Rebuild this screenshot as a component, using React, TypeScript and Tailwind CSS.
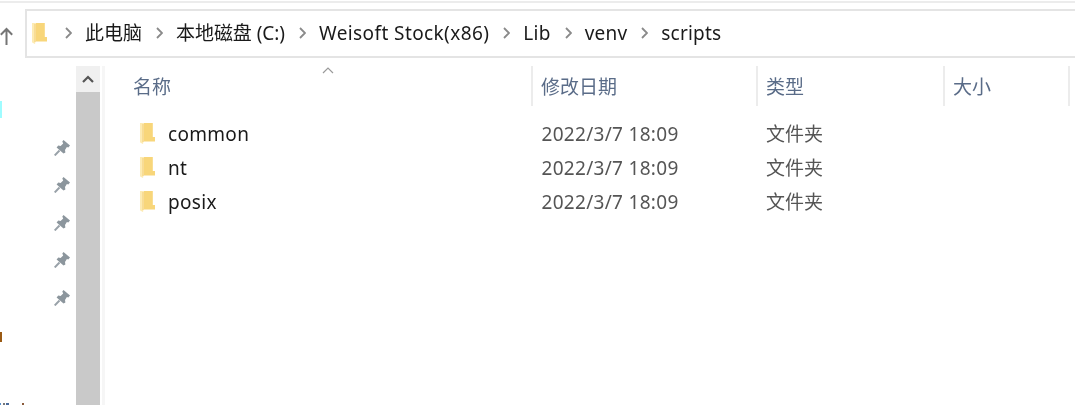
import React from "react";

const FONT = "font-['Noto_Sans','Noto_Sans_CJK_SC',sans-serif]";

function Folder({ className }: { className?: string }) {
  return (
    <svg viewBox="0 0 15 21" className={className}>
      <path d="M3.5 0H12.8V14H15V18.5H3.5Z" fill="#f8d67a" />
      <path d="M0 0H3.5V18.5L3 21L0.5 19.8L0 19Z" fill="#fdebb4" />
      <path d="M3 1V19" stroke="#f3ce75" strokeWidth="1" />
    </svg>
  );
}

function Chevron() {
  return (
    <svg viewBox="0 0 7 12" className="w-[7px] h-[12px] shrink-0 mr-[13px]">
      <path d="M1 1L6 6L1 11" fill="none" stroke="#8a8a8a" strokeWidth="1.8" />
    </svg>
  );
}

function Pin() {
  return (
    <svg viewBox="0 0 16 16" className="w-[16px] h-[16px]">
      <path d="M0.7 15.5L5.5 10.5" stroke="#98a1a8" strokeWidth="1.9" />
      <path d="M9.5 0L16 5.5L14.3 7.4L12.9 7L11 10L11.4 12.4L9.5 13.6L2.6 7.4L4.3 5.6L6.6 6L9.2 3.4L8.3 1.5Z" fill="#8c969d" />
    </svg>
  );
}

const crumbs = [
  { label: "此电脑", spacing: "tracking-[0px]" },
  { label: "本地磁盘 (C:)", spacing: "tracking-[-0.05px]" },
  { label: "Weisoft Stock(x86)", spacing: "tracking-[0.4px]" },
  { label: "Lib", spacing: "tracking-[0.3px]" },
  { label: "venv", spacing: "tracking-[0.2px]" },
  { label: "scripts", spacing: "tracking-[0.2px]" },
];

const columns = [
  { label: "名称", width: "w-[428px]", pad: "pl-[28px]" },
  { label: "修改日期", width: "w-[225px]", pad: "pl-[8px]" },
  { label: "类型", width: "w-[187px]", pad: "pl-[8px]" },
  { label: "大小", width: "w-[125px]", pad: "pl-[8px]" },
];

const rows = ["common", "nt", "posix"];

export default function App() {
  return (
    <div className={`${FONT} relative w-[1075px] h-[405px] overflow-hidden bg-white text-[19px] text-[#1a1a1a] blur-[0.35px]`}>
      <div className="h-[9px] pt-[1px]">
        <div className="h-[2px] bg-[#ececec]" />
      </div>

      <div className="flex h-[49px]">
        <div className="w-[25px] shrink-0 flex items-end pb-[13px]">
          <svg viewBox="0 0 13 18" className="w-[13px] h-[18px]">
            <path d="M6.5 18V2M0.8 7.7L6.5 2L12.2 7.7" fill="none" stroke="#757575" strokeWidth="2" />
          </svg>
        </div>
        <div className="flex-1 flex items-center border-y-2 border-l-2 border-[#e4e4e4] pl-[5px] pb-[1px]">
          <Folder className="w-[15px] h-[21px] mr-[18px] shrink-0" />
          {crumbs.map((c) => (
            <React.Fragment key={c.label}>
              <Chevron />
              <span className={`${c.spacing} mr-[14px] leading-none whitespace-nowrap`}>{c.label}</span>
            </React.Fragment>
          ))}
        </div>
      </div>

      <div className="flex mt-[8px] h-[339px]">
        <div className="w-[76px] shrink-0 flex flex-col items-end pt-[74px] pr-[6px] gap-[21.4px]">
          {[0, 1, 2, 3, 4].map((i) => (
            <Pin key={i} />
          ))}
        </div>

        <div className="w-[24px] shrink-0 flex flex-col bg-[#c9c9c9]">
          <div className="h-[26px] bg-[#f0f0f0] flex items-center justify-center">
            <svg viewBox="0 0 12 8" className="w-[12px] h-[8px]">
              <path d="M1 7L6 2L11 7" fill="none" stroke="#555" strokeWidth="2.2" />
            </svg>
          </div>
        </div>

        <div className="w-[3px] shrink-0 bg-[#f6f6f6] ml-[2px]" />

        <div className="flex-1 relative">
          <div className="flex h-[40px] text-[#5a6c88]">
            {columns.map((c) => (
              <div key={c.label} className={`${c.width} ${c.pad} shrink-0 flex items-center h-[40px] pt-[2px] border-r-2 border-[#ececec]`}>
                {c.label}
              </div>
            ))}
          </div>
          <svg viewBox="0 0 12 7" className="absolute left-[217px] top-[1px] w-[12px] h-[7px]">
            <path d="M1 6L6 1L11 6" fill="none" stroke="#9a9a9a" strokeWidth="1.2" />
          </svg>

          <div className="flex flex-col pt-[11px]">
            {rows.map((name) => (
              <div key={name} className="flex h-[34px] items-center">
                <div className="w-[428px] shrink-0 flex items-center pl-[35px]">
                  <Folder className="w-[15px] h-[21px] mr-[13px] -mt-[1px] shrink-0" />
                  <span className="tracking-[0.3px]">{name}</span>
                </div>
                <div className="w-[225px] shrink-0 pl-[8.5px] text-[#555] tracking-[0.3px]">2022/3/7 18:09</div>
                <div className="pl-[8px] text-[#555]">文件夹</div>
              </div>
            ))}
          </div>
        </div>
      </div>

      <div className="absolute left-0 top-[101px] w-[2px] h-[17px] bg-[#9ffcff]" />
      <div className="absolute left-0 top-[332px] w-[2px] h-[10px] bg-[#9a5a14]" />
      <div className="absolute left-0 bottom-0 flex h-[2px] items-stretch">
        <div className="w-[1px] bg-[#5a8fc8]" />
        <div className="w-[2px] ml-[2px] bg-[#777]" />
        <div className="w-[3px] ml-[1px] bg-[#4a6a9a]" />
        <div className="w-[2px] ml-[13px] bg-[#8a5a3a]" />
      </div>
    </div>
  );
}
